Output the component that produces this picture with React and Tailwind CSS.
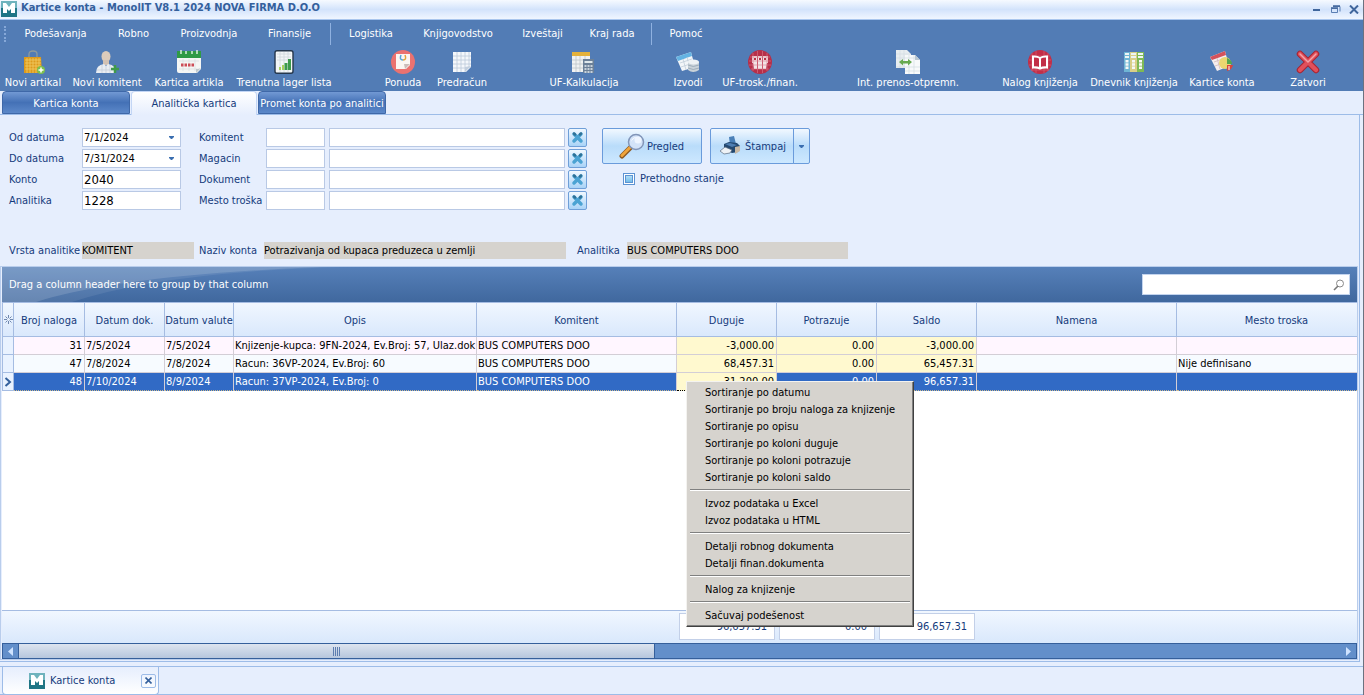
// src/App.jsx
import React, { useState } from "react";

const menuItems = [
  { label: "Podešavanja", width: "w-[93px]" },
  { label: "Robno", width: "w-[63px]" },
  { label: "Proizvodnja", width: "w-[88px]" },
  { label: "Finansije", width: "w-[73px]" },
  { sep: true },
  { label: "Logistika", width: "w-[74px]" },
  { label: "Knjigovodstvo", width: "w-[100px]" },
  { label: "Izveštaji", width: "w-[69px]" },
  { label: "Kraj rada", width: "w-[70px]" },
  { sep: true },
  { label: "Pomoć", width: "w-[62px]" },
];

const tools = [
  { label: "Novi artikal", icon: "bag", cls: "w-[66px]" },
  { label: "Novi komitent", icon: "person", cls: "w-[82px]" },
  { label: "Kartica artikla", icon: "calendar", cls: "w-[82px]" },
  { label: "Trenutna lager lista", icon: "report", cls: "w-[108px]" },
  { label: "Ponuda", icon: "offer", cls: "w-[54px] ml-[38px]" },
  { label: "Predračun", icon: "sheet", cls: "w-16" },
  { label: "UF-Kalkulacija", icon: "calc", cls: "w-20 ml-[50px]" },
  { label: "Izvodi", icon: "statements", cls: "w-10 ml-11" },
  { label: "UF-trosk./finan.", icon: "binders", cls: "w-24 ml-1" },
  { label: "Int. prenos-otpremn.", icon: "transfer", cls: "w-[116px] ml-[42px]" },
  { label: "Nalog knjiženja", icon: "book", cls: "w-[88px] ml-[30px]" },
  { label: "Dnevnik knjiženja", icon: "ledger", cls: "w-[100px]" },
  { label: "Kartice konta", icon: "cards", cls: "w-[76px]" },
  { label: "Zatvori", icon: "close", cls: "w-16 ml-4" },
];

const columns = [
  { label: "Broj naloga", width: "w-[71px]" },
  { label: "Datum dok.", width: "w-20" },
  { label: "Datum valute", width: "w-[69px]" },
  { label: "Opis", width: "w-[243px]" },
  { label: "Komitent", width: "w-[200px]" },
  { label: "Duguje", width: "w-[100px]" },
  { label: "Potrazuje", width: "w-[100px]" },
  { label: "Saldo", width: "w-[100px]" },
  { label: "Namena", width: "w-[200px]" },
  { label: "Mesto troska", width: "w-[200px]" },
];

const rows = [
  ["31", "7/5/2024", "7/5/2024", "Knjizenje-kupca: 9FN-2024, Ev.Broj: 57, Ulaz.dok", "BUS COMPUTERS DOO", "-3,000.00", "0.00", "-3,000.00", "", ""],
  ["47", "7/8/2024", "7/8/2024", "Racun: 36VP-2024, Ev.Broj: 60", "BUS COMPUTERS DOO", "68,457.31", "0.00", "65,457.31", "", "Nije definisano"],
  ["48", "7/10/2024", "8/9/2024", "Racun: 37VP-2024, Ev.Broj: 0", "BUS COMPUTERS DOO", "31,200.00", "0.00", "96,657.31", "", ""],
];

const contextMenu = [
  [
    "Sortiranje po datumu",
    "Sortiranje po broju naloga za knjizenje",
    "Sortiranje po opisu",
    "Sortiranje po koloni duguje",
    "Sortiranje po koloni potrazuje",
    "Sortiranje po koloni saldo",
  ],
  ["Izvoz podataka u Excel", "Izvoz podataka u HTML"],
  ["Detalji robnog dokumenta", "Detalji finan.dokumenta"],
  ["Nalog za knjizenje"],
  ["Sačuvaj podešenost"],
];

function Logo() {
  return (
    <svg width="16" height="16" viewBox="0 0 16 16" className="shrink-0">
      <rect width="16" height="16" fill="#6fb3bd" />
      <path d="M0 7h16v9H0z" fill="#1f7585" />
      <path d="M2 12V2h3l3 4 3-4h3v10h-4V8l-2 2-2-2v4z" fill="#fff" />
    </svg>
  );
}

function Arrow() {
  return (
    <svg width="5" height="3" viewBox="0 0 5 3" className="shrink-0">
      <path d="M0 0h5v1L3 3H2L0 1z" fill="#3a6eb0" />
    </svg>
  );
}

function ToolIcon({ name }) {
  const shapes = {
    bag: (
      <>
        <path d="M8 8V4q0-3 4-3t4 3v4" fill="none" stroke="#8f9a9c" strokeWidth="1.300" />
        <path d="M3 7h17l1 16H3z" fill="#dd9a1c" />
        <path d="M4 10h16M4 13h16M4 16h16M4 19h16M6 8v15M9 8v15M12 8v15M15 8v15M18 8v15" stroke="#f3cb66" strokeWidth=".8" />
        <circle cx="20" cy="20" r="4" fill="#7cc04e" />
        <path d="M20 17.500v5M17.500 20h5" stroke="#fff" strokeWidth="1.500" />
      </>
    ),
    person: (
      <>
        <ellipse cx="11" cy="6.500" rx="4.500" ry="5.500" fill="#dccbbb" />
        <path d="M8 10h6v5H8z" fill="#d2c2b4" />
        <path d="M1 23q0-8 8-9l2 2 2-2q8 1 8 9z" fill="#e9edf2" />
        <path d="M2 20h18M7 15v8M11 16v7M15 15v8" stroke="#c3ccd8" strokeWidth=".7" />
        <path d="M20 15v8M16 19h8" stroke="#3f9a4a" strokeWidth="2.500" />
      </>
    ),
    calendar: (
      <>
        <path d="M0 2h24v17l-4 4H2q-2 0-2-2z" fill="#f5f6f4" />
        <path d="M0 1h24v7H0z" fill="#2f9a45" />
        <path d="M4 0v4M9 1v3M15 1v3M20 0v4" stroke="#d9efd9" strokeWidth="1.500" />
        <path d="M2 11h20M2 19h18M6 9v12M12 9v12M18 9v12" stroke="#d8dde0" strokeWidth=".7" />
        <path d="M4 15h13" stroke="#cc4c56" strokeWidth="3" strokeDasharray="2.500 1" />
        <path d="M24 18l-5 5v-4q3 0 5-1z" fill="#bfc8cc" />
      </>
    ),
    report: (
      <>
        <rect x="3" y=".7" width="18" height="22.600" rx="2" fill="#f3f6f7" stroke="#25374c" strokeWidth="1.400" />
        <path d="M5 4h14M5 7h14M5 10h14M8 2v20M12 2v20M16 2v20" stroke="#cfd8dd" strokeWidth=".8" />
        <path d="M7 20v-3h2v3zM10 20v-5h2v5z" fill="#a7cf5e" />
        <path d="M12.500 20v-7h3v7zM16 20V9h3v11z" fill="#3d9a4d" />
      </>
    ),
    offer: (
      <>
        <circle cx="12" cy="12" r="12" fill="#ea7270" />
        <path d="M5 4h14v11l-4 4H5z" fill="#fbf6f3" />
        <path d="M10 5q-2 5 2 5" fill="none" stroke="#55a6d9" strokeWidth="1.500" />
        <path d="M12 10q4 0 2-5" fill="none" stroke="#e0a53c" strokeWidth="1.500" />
        <path d="M19 14l-5 5-1-5z" fill="#cbbcba" />
      </>
    ),
    sheet: (
      <>
        <path d="M3 2h18v15l-5 5H3z" fill="#f4f7fb" />
        <path d="M3 6h18M3 10h18M3 14h18M3 18h15M7 2v20M11 2v20M15 2v20M19 2v16" stroke="#bccadb" strokeWidth=".8" />
        <path d="M21 16l-6 6v-5z" fill="#c2cfde" />
      </>
    ),
    calc: (
      <>
        <rect x="0" y="2" width="18" height="20" fill="#f0f2f2" />
        <path d="M0 2h18v4H0z" fill="#e3b13b" />
        <path d="M0 10h18M0 14h18M0 18h18M4 6v16M8 6v16M13 6v16" stroke="#bcc5ca" strokeWidth=".8" />
        <rect x="11" y="9" width="11" height="14" fill="#6b8098" />
        <path d="M12.500 12h8" stroke="#dfe8ec" strokeWidth="2" />
        <path d="M12.500 16h8M12.500 19h8M12.500 22h8" stroke="#e8edf2" strokeWidth="1.500" strokeDasharray="2 1" />
      </>
    ),
    statements: (
      <>
        <path d="M0 7l15-5 4 15-13 4z" fill="#f2f5f8" />
        <path d="M0 7l15-5 1 4L2 11z" fill="#64b3e2" />
        <path d="M4 13l12-4M5 17l12-4M7 9l3 11M11 7l3 11" stroke="#c2ced9" strokeWidth=".8" />
        <path d="M12 12v8q5 4 11 0v-8z" fill="#c9d2d9" />
        <ellipse cx="17.500" cy="12" rx="5.500" ry="2.500" fill="#eef2f4" />
        <path d="M12 15q5 3 11 0M12 18q5 3 11 0" fill="none" stroke="#93a3b1" strokeWidth=".8" />
      </>
    ),
    binders: (
      <>
        <circle cx="12" cy="12" r="12" fill="#b72f49" />
        <path d="M4 6h5v13H6l-1-6H4zM10 6h4v13h-4zM15 6h5v7h-1l-1 6h-3z" fill="#f3e4e6" />
        <path d="M6 9h2M11 9h2M16 9h2" stroke="#b72f49" strokeWidth="2" />
        <path d="M2 7h20M1 11h22M1 15h22M3 19h18M5 3v18M9.500 1v22M14.500 1v22M19 3v18" stroke="#d9788a" strokeWidth=".6" />
      </>
    ),
    transfer: (
      <>
        <path d="M0 0h11l4 4v14H0z" fill="#e8edf0" />
        <path d="M9 5h10l5 5v14H9z" fill="#f8fafb" />
        <path d="M0 4h14M0 8h22M0 17h24M9 21h15M4 0v18M8 0v18M13 5v19M18 5v19" stroke="#d3dce3" strokeWidth=".7" />
        <path d="M19 5v5h5z" fill="#b9c7d1" />
        <path d="M3 12l4-3v2h5V9l4 3-4 3.500v-2H7v2z" fill="#67aa50" />
      </>
    ),
    book: (
      <>
        <circle cx="12" cy="12" r="12" fill="#c22f48" />
        <path d="M2 6h20M1 10h22M1 15h22M3 20h18M4 3v18M8 1v22M16 1v22M20 3v18" stroke="#d6677a" strokeWidth=".6" />
        <path d="M12 8Q9 6 5 6.500v11q4-.5 7 1 3-1.500 7-1v-11Q15 6 12 8zv10" fill="#c22f48" stroke="#fff" strokeWidth="2" />
      </>
    ),
    ledger: (
      <>
        <path d="M2 2h6v20H2z" fill="#6fb5d4" />
        <path d="M8 2h7v20H8z" fill="#d9cf88" />
        <path d="M15 2h7v20h-7z" fill="#7fb955" />
        <path d="M3 4h4M3 7h4M9 4h5M9 7h5M16 4h5M16 7h5" stroke="#eef5f4" strokeWidth="1.800" />
        <path d="M5 10v9M11.500 10v9M18.500 10v9" stroke="#f6f8f6" strokeWidth="3" strokeDasharray="2.500 .7" />
      </>
    ),
    cards: (
      <>
        <path d="M0 7l15-6 4 15-12 5z" fill="#f5eeee" />
        <path d="M0 7l15-6 1 4L2 10z" fill="#d4525c" />
        <path d="M4 12l11-4M5 16l11-4M7 8l3 11" stroke="#d3b9bd" strokeWidth=".8" />
        <circle cx="15" cy="13" r="6" fill="#ecd770" />
        <path d="M17 8q5 2 5 6h-5z" fill="#54a74e" />
        <path d="M17 15h6q-1 5-6 6z" fill="#d8453d" />
        <path d="M19 16v4" stroke="#fff" />
      </>
    ),
    close: (
      <>
        <path d="M4 4l16 16M20 4L4 20" stroke="#a82331" strokeWidth="6.500" strokeLinecap="round" />
        <path d="M4 4l16 16M20 4L4 20" stroke="#e0505b" strokeWidth="4.500" strokeLinecap="round" />
        <path d="M4 4l8 8 8-8" fill="none" stroke="#f3a3a8" strokeWidth="1.500" strokeLinecap="round" />
      </>
    ),
  };
  return (
    <svg width="24" height="24" viewBox="0 0 24 24">
      {shapes[name]}
    </svg>
  );
}

function TitleBar() {
  return (
    <header className="flex h-5 shrink-0 items-start border-b border-[#a9c6ee] bg-gradient-to-b from-[#f6faff] via-[#d3e3fb] to-[#f0f6ff] pl-px pr-1">
      <div className="pt-px">
        <Logo />
      </div>
      <h1 className="ml-1 text-[11px] leading-4 font-bold text-[#34609c]">
        Kartice konta - MonolIT V8.1 2024 NOVA FIRMA D.O.O
      </h1>
      <div className="ml-auto flex h-[18px] items-center gap-2">
        <button aria-label="Minimize" className="flex h-3 w-3 items-center justify-center">
          <svg width="8" height="10" viewBox="0 0 8 10"><path d="M0 5h7v2H0z" fill="#40669c" /></svg>
        </button>
        <button aria-label="Restore">
          <svg width="10" height="9" viewBox="0 0 10 9">
            <path d="M2 1.500h7v5M.5 3.500h6v4h-6z" fill="none" stroke="#5b7fb3" />
            <path d="M2 1h7M0 3h7" stroke="#40669c" strokeWidth="1.500" />
          </svg>
        </button>
        <button aria-label="Close">
          <svg width="10" height="9" viewBox="0 0 10 9"><path d="M1 .5l8 8M9 .5l-8 8" stroke="#40669c" strokeWidth="2" /></svg>
        </button>
      </div>
    </header>
  );
}

function Toolbar() {
  return (
    <div className="shrink-0 bg-[#527cb5] text-white">
      <nav className="flex h-[26px] items-center pt-px pl-1">
        <div className="h-4 w-[5px] border-l-2 border-dotted border-[#86a8d8]" />
        {menuItems.map((m, i) =>
          m.sep ? (
            <div key={i} className="ml-1 mr-[3px] h-[22px] w-px bg-[#8fb1e0]" />
          ) : (
            <button key={i} className={`${m.width} text-center text-[11px] leading-[17px]`}>
              {m.label}
            </button>
          )
        )}
      </nav>
      <div className="flex h-[45px] items-start pt-1">
        {tools.map((t) => (
          <button key={t.label} className={`${t.cls} flex shrink-0 flex-col items-center text-[11px] leading-[17px] whitespace-nowrap`}>
            <ToolIcon name={t.icon} />
            <span>{t.label}</span>
          </button>
        ))}
      </div>
    </div>
  );
}

function Tabs() {
  const idle = "h-[23px] w-32 rounded-t-sm border border-[#3f68a8] bg-gradient-to-b from-[#7299d4] via-[#4471b6] to-[#5c88c9] pt-[3px] text-white whitespace-nowrap";
  return (
    <div className="flex h-6 shrink-0 items-end border-b border-[#9dbce8] pl-[2px] text-[11px] leading-4" role="tablist">
      <button role="tab" className={idle}>Kartica konta</button>
      <button role="tab" aria-selected="true" className="mx-px -mb-px h-6 w-[126px] rounded-t-sm border-x border-t border-[#c3d6f5] bg-gradient-to-b from-white to-[#e6eefd] pt-px text-[#153b7c]">
        Analitička kartica
      </button>
      <button role="tab" className={idle}>Promet konta po analitici</button>
    </div>
  );
}

const label = "text-[#153b7c]";
const input = "h-[19px] w-full min-w-0 border border-[#b9c9e5] bg-white px-px text-black outline-none";

function DateField({ id, text, value }) {
  return (
    <>
      <label htmlFor={id} className={label}>{text}</label>
      <div className="flex h-[19px] items-center border border-[#b9c9e5] bg-white pr-[6px]">
        <input id={id} defaultValue={value} className="w-full min-w-0 px-px text-black outline-none" />
        <Arrow />
      </div>
    </>
  );
}

function LookupField({ id, text }) {
  return (
    <>
      <label htmlFor={id} className={label}>{text}</label>
      <input id={id} className={input} />
      <input aria-label={text + " naziv"} className={input} />
      <button aria-label={"Obriši " + text} className="flex h-[19px] w-[19px] items-center justify-center rounded-[2px] border border-[#6f9fd8] bg-gradient-to-b from-[#f0f8ff] to-[#a9d3f7]">
        <svg width="13" height="13" viewBox="0 0 13 13">
          <path d="M3 3l7 7M10 3l-7 7" stroke="#4ba3d3" strokeWidth="3.500" strokeLinecap="round" />
          <path d="M3 2.500l1 1M10 2.500l-1 1" stroke="#2f7196" strokeWidth="2.500" strokeLinecap="round" />
        </svg>
      </button>
    </>
  );
}

function FilterForm() {
  const [previous, setPrevious] = useState(false);
  const button = "flex h-9 items-center border border-[#6a9bdb] bg-gradient-to-b from-[#f1f8ff] via-[#b9dcfa] to-[#cde8ff] text-[#153b7c]";

  return (
    <form className="flex shrink-0 flex-col pt-[13px] pl-[9px] text-[11px] leading-4" onSubmit={(e) => e.preventDefault()}>
      <div className="flex items-start">
        <div className="grid grid-cols-[73px_99px] items-center gap-y-[2px]">
          <DateField id="od" text="Od datuma" value="7/1/2024" />
          <DateField id="do" text="Do datuma" value="7/31/2024" />
          <label htmlFor="konto" className={label}>Konto</label>
          <input id="konto" defaultValue="2040" className={`${input} text-[13px]`} />
          <label htmlFor="analitika" className={label}>Analitika</label>
          <input id="analitika" defaultValue="1228" className={`${input} text-[13px]`} />
        </div>
        <div className="ml-[18px] grid grid-cols-[67px_59px_240px_22px] items-center gap-y-[2px] [&>button]:ml-[3px] [&>input:nth-child(4n+3)]:ml-1 [&>input:nth-child(4n+3)]:w-[236px]">
          <LookupField id="komitent" text="Komitent" />
          <LookupField id="magacin" text="Magacin" />
          <LookupField id="dokument" text="Dokument" />
          <LookupField id="mesto" text="Mesto troška" />
        </div>
        <div className="ml-[15px]">
          <div className="flex gap-2">
            <button className={`${button} w-[100px] rounded-[2px] pl-4`}>
              <svg width="26" height="26" viewBox="0 0 26 26">
                <path d="M3 23l8-8" stroke="#8d5b24" strokeWidth="5" strokeLinecap="round" />
                <path d="M3 22.500l8-8" stroke="#f0a53c" strokeWidth="3" strokeLinecap="round" />
                <circle cx="17" cy="9" r="7.500" fill="#d3e3f8" stroke="#8195b8" strokeWidth="1.500" />
                <circle cx="19" cy="7" r="3.500" fill="#eef5ff" />
                <path d="M12 9q1-5 6-5-4 1-6 5z" fill="#fff" />
              </svg>
              <span className="ml-[2px] pt-px">Pregled</span>
            </button>
            <div className="flex">
              <button className={`${button} w-[84px] rounded-l-[2px] pl-2`}>
                <svg width="22" height="20" viewBox="0 0 22 20" className="shrink-0">
                  <path d="M10 1l5-1 2 8-6 1z" fill="#4a80b8" />
                  <path d="M5 8l5-2 8 1 3 3-2 6-6 1-8-4z" fill="#23486f" />
                  <path d="M6 8l5-1 7 2-5 2z" fill="#4f7fb3" />
                  <path d="M1 15l5-4 7 3-2 3-6 1z" fill="#eef2f6" stroke="#5b6c80" strokeWidth=".7" />
                  <path d="M16 11l5-1v5l-5 3z" fill="#c9b9a5" />
                </svg>
                <span className="ml-1 pt-px">Štampaj</span>
              </button>
              <button aria-label="Štampaj opcije" className={`${button} -ml-px w-[17px] justify-center rounded-r-[2px]`}>
                <Arrow />
              </button>
            </div>
          </div>
          <label className={`${label} mt-[7px] ml-[21px] flex items-center gap-[5px]`}>
            <input
              type="checkbox"
              checked={previous}
              onChange={(e) => setPrevious(e.target.checked)}
              className="h-3 w-3 appearance-none border border-[#5d93d3] bg-gradient-to-b from-[#c5e8fb] to-[#5bb1e3] shadow-[inset_0_0_0_1px_#fff,inset_0_0_0_2px_#5d93d3]"
            />
            Prethodno stanje
          </label>
        </div>
      </div>
      <div className="mt-8 mb-[7px] flex items-center">
        <label htmlFor="vrsta" className={`${label} w-[73px] pt-px whitespace-nowrap`}>Vrsta analitike</label>
        <input id="vrsta" readOnly value="KOMITENT" className="h-[17px] w-28 min-w-0 bg-[#d6d3ce] text-black" />
        <label htmlFor="naziv" className={`${label} ml-[5px] w-[65px] pt-px`}>Naziv konta</label>
        <input id="naziv" readOnly value="Potrazivanja od kupaca preduzeca u zemlji" className="h-[17px] w-[302px] min-w-0 bg-[#d6d3ce] text-black" />
        <label htmlFor="naziv2" className={`${label} ml-[11px] w-[50px] pt-px`}>Analitika</label>
        <input id="naziv2" readOnly value="BUS COMPUTERS DOO" className="h-[17px] w-[221px] min-w-0 bg-[#d6d3ce] text-black" />
      </div>
    </form>
  );
}

function GroupPanel() {
  return (
    <div className="relative flex h-[35px] shrink-0 items-center bg-gradient-to-b from-[#5680b9] to-[#40689e] pl-[7px] text-[11px] text-white">
      <svg className="absolute top-0 left-0" width="340" height="35" viewBox="0 0 340 35">
        <path d="M0 0h340Q160 5 70 35H0z" fill="#fff" opacity=".08" />
        <path d="M0 0h320Q120 8 34 35H0z" fill="#fff" opacity=".14" />
      </svg>
      <span className="relative pt-px leading-4">Drag a column header here to group by that column</span>
      <div className="relative mr-[7px] ml-auto flex h-[21px] w-52 items-center border border-[#c3d4ee] bg-white pr-1">
        <input aria-label="Search" className="w-full min-w-0 text-black outline-none" />
        <svg width="12" height="12" viewBox="0 0 12 12" className="shrink-0">
          <circle cx="7" cy="4.500" r="3.500" fill="none" stroke="#8a8a8a" />
          <path d="M5 7l-4 4" stroke="#777" strokeWidth="1.600" />
        </svg>
      </div>
    </div>
  );
}

function CardTable() {
  const [selected, setSelected] = useState(2);

  const cellClass = (c, r) => {
    const active = r === selected;
    let cls = "overflow-hidden border-r border-b whitespace-nowrap pt-px pb-0 pl-px pr-[2px] ";
    if (active && c === 5) cls += "border-r-[#d3ced6] border-b-black [border-bottom-style:dotted] ";
    else if (active) cls += "border-r-[#d3ced6] border-b-[#c9b78c] [border-bottom-style:dotted] ";
    else cls += "border-[#d3ced6] ";
    if (c === 0 || (c >= 5 && c <= 7)) cls += "text-right ";
    if (c >= 5 && c <= 7 && !(active && c > 5)) cls += "bg-[#fff9cf] text-black ";
    return cls;
  };

  return (
    <table className="w-[1375px] table-fixed border-separate border-spacing-0 text-[11px] leading-4">
      <thead>
        <tr className="h-[35px] bg-gradient-to-b from-[#f1f7ff] to-[#d9e8fc] text-[#153b7c]">
          <th className="w-3 border-x border-y border-[#a5bce2] p-0 font-normal">
            <svg width="9" height="9" viewBox="0 0 9 9" className="mx-auto">
              <path d="M4.500 0v3M4.500 6v3M0 4.500h3M6 4.500h3M1.500 1.500l2 2M5.500 5.500l2 2M7.500 1.500l-2 2M3.500 5.500l-2 2" stroke="#6f87ae" />
            </svg>
          </th>
          {columns.map((c) => (
            <th key={c.label} className={`${c.width} border-y border-r border-[#a5bce2] px-0 pt-[2px] pb-0 font-normal whitespace-nowrap`}>
              {c.label}
            </th>
          ))}
        </tr>
      </thead>
      <tbody>
        {rows.map((row, r) => (
          <tr
            key={r}
            onClick={() => setSelected(r)}
            className={`h-[18px] ${r === selected ? "bg-[#316ac5] text-white" : r % 2 ? "bg-[#f7fbff] text-black" : "bg-[#fff6ff] text-black"}`}
          >
            <td className="border-x border-b border-[#a5bce2] bg-[#e9f2ff] p-0">
              {r === selected && (
                <svg width="8" height="10" viewBox="0 0 8 10" className="mx-auto">
                  <path d="M1.500 1l4.500 4-4.500 4" fill="none" stroke="#34609c" strokeWidth="2" />
                </svg>
              )}
            </td>
            {row.map((v, c) => (
              <td key={c} className={cellClass(c, r)}>{v}</td>
            ))}
          </tr>
        ))}
      </tbody>
    </table>
  );
}

function ContextMenu() {
  return (
    <div role="menu" className="absolute top-[79px] left-[684px] w-[228px] border border-t-[#f4f3f0] border-r-[#404040] border-b-[#404040] border-l-[#f4f3f0] bg-[#d6d3ce] px-[3px] py-[2px] text-[11px] leading-[17px] text-black shadow-[inset_-1px_-1px_0_#808080]">
      {contextMenu.map((group, i) => (
        <div key={i}>
          {i > 0 && <div className="mt-[3px] mb-1 h-[2px] border-t border-b border-t-[#808080] border-b-white" />}
          {group.map((item) => (
            <button key={item} role="menuitem" className="block h-[17px] w-full pl-[15px] text-left whitespace-nowrap">
              {item}
            </button>
          ))}
        </div>
      ))}
    </div>
  );
}

function Summary() {
  return (
    <div className="flex h-[33px] shrink-0 gap-1 border-t border-[#a5bce2] bg-gradient-to-b from-[#f1f7ff] to-[#d9e8fc] pt-[2px] pl-[677px] text-[11px]">
      {["96,657.31", "0.00", "96,657.31"].map((v, i) => (
        <output key={i} className="flex h-[27px] w-24 items-center justify-end border border-[#c3d0e8] bg-white pt-[2px] pr-[7px] text-[#153b7c]">
          {v}
        </output>
      ))}
    </div>
  );
}

function ScrollBar() {
  return (
    <div className="flex h-4 shrink-0 border border-[#355f9b] bg-[#638fca]">
      <button aria-label="Left" className="flex w-4 items-center justify-center border-r border-[#355f9b]">
        <svg width="5" height="9" viewBox="0 0 5 9"><path d="M5 0v9L0 4.500z" fill="#cfe3ff" /></svg>
      </button>
      <div className="flex w-[47%] items-center justify-center gap-px border-r border-[#355f9b] bg-gradient-to-b from-[#dde4ef] to-[#b6c6dd]">
        <div className="h-[9px] w-px bg-[#5d7db0]" />
        <div className="h-[9px] w-px bg-[#5d7db0]" />
        <div className="h-[9px] w-px bg-[#5d7db0]" />
        <div className="h-[9px] w-px bg-[#5d7db0]" />
      </div>
      <button aria-label="Right" className="ml-auto flex w-4 items-center justify-center">
        <svg width="5" height="9" viewBox="0 0 5 9"><path d="M0 0v9l5-4.500z" fill="#cfe3ff" /></svg>
      </button>
    </div>
  );
}

export default function App() {
  return (
    <div className="flex min-h-screen flex-col overflow-hidden border-r border-[#6b7280] bg-[#e6eefd] font-['DejaVu_Sans_Condensed','DejaVu_Sans',sans-serif]">
      <TitleBar />
      <Toolbar />
      <Tabs />
      <main className="mr-[3px] flex flex-1 flex-col border-r border-b border-[#9dbce8] pr-px pb-px">
        <FilterForm />
        <section className="flex flex-1 flex-col border-x border-t border-b border-[#b9cdec] pl-px">
          <GroupPanel />
          <div className="relative flex flex-1 flex-col">
            <div className="flex-1 overflow-hidden bg-white">
              <CardTable />
            </div>
            <Summary />
            <ContextMenu />
          </div>
          <ScrollBar />
        </section>
      </main>
      <footer className="mt-1 flex h-[29px] shrink-0 items-start border-t border-b border-[#9dbce8] pl-[2px] text-[11px]">
        <div className="flex h-7 w-[157px] items-center rounded-b border-x border-b border-[#9dbce8] bg-gradient-to-b from-[#e6eefd] to-white pl-[26px] text-[#153b7c]">
          <Logo />
          <span className="ml-[5px] pt-px">Kartice konta</span>
          <button aria-label="Zatvori karticu" className="mr-[2px] ml-auto flex h-[14px] w-[15px] items-center justify-center rounded-[2px] border border-[#9dbce8]">
            <svg width="7" height="7" viewBox="0 0 7 7"><path d="M.5.5l6 6M6.500.5l-6 6" stroke="#34609c" strokeWidth="1.600" /></svg>
          </button>
        </div>
      </footer>
    </div>
  );
}
